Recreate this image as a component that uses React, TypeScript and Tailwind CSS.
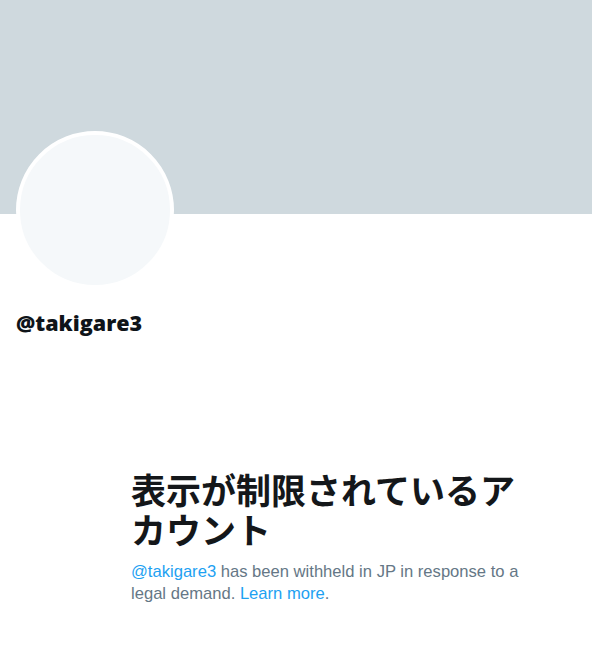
export default function App() {
  return (
    <div className="min-h-[652px] w-[592px] bg-white font-['Open_Sans','Noto_Sans_CJK_JP',sans-serif]">
      <div className="h-[214px] bg-[#cfd9de]" />
      <div className="px-4">
        <div className="-mt-[83px] h-[158px] w-[158px] rounded-full border-4 border-white bg-[#f5f8fa]" />
        <p className="mt-[22px] text-[21.5px] font-extrabold leading-6 text-[#0f1419]">
          @takigare3
        </p>
      </div>
      <div className="ml-[131px] mr-[60px] mt-[134px]">
        <h1 className="font-['Noto_Sans_CJK_JP',sans-serif] text-[35px] font-bold leading-[40px] text-[#14171a]">
          表示が制限されているアカウント
        </h1>
        <p className="mt-[12px] font-['Liberation_Sans',sans-serif] text-[16.6px] leading-[22px] text-[#657786]">
          <span className="text-[#1da1f2]">@takigare3</span> has been withheld in JP in
          response to a legal demand.{" "}
          <span className="text-[#1da1f2]">Learn more</span>.
        </p>
      </div>
    </div>
  );
}
